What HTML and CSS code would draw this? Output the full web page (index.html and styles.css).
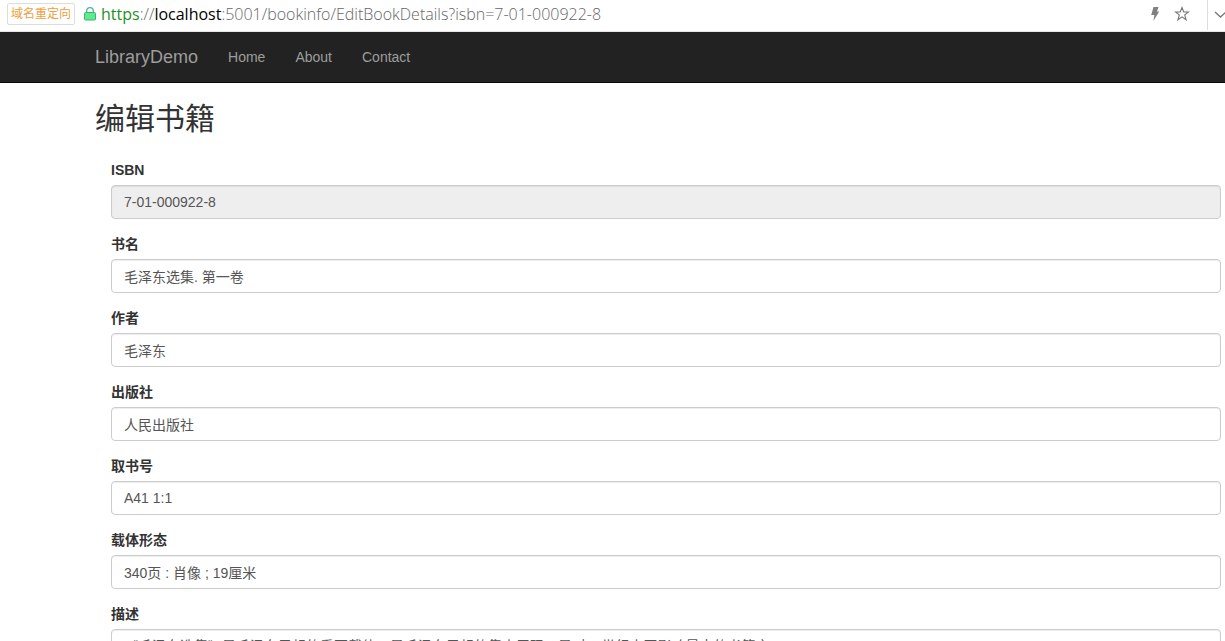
FILE: index.html
```html
<!DOCTYPE html>
<html lang="zh-CN">
<head>
  <meta charset="UTF-8" />
  <meta name="viewport" content="width=device-width, initial-scale=1.0" />
  <title>编辑书籍 - LibraryDemo</title>
  <link rel="stylesheet" href="styles.css">
</head>
<body>

  <!-- 地址栏 -->
  <div class="address-bar">
    <span class="redirect-tag">域名重定向</span>
    <svg class="icon-lock" width="12" height="14" viewBox="0 0 12 14">
      <path d="M2.7 6V4a3.3 3.3 0 0 1 6.6 0v2" fill="none" stroke="#4cb3a0" stroke-width="1.3" />
      <rect x="0.5" y="5.5" width="11" height="7.5" rx="1" fill="#5eea8d" stroke="#35b877" />
    </svg>
    <div class="url"><span class="scheme">https</span>://<span class="host">localhost</span>:5001/bookinfo/EditBookDetails?isbn=7-01-000922-8</div>
    <div class="address-actions">
      <button type="button" aria-label="极速模式">
        <svg width="16" height="16" viewBox="0 0 16 16">
          <path d="M6.5 1H11.5L10 5.5H12.2L6.4 15L7.4 9H4.2Z" fill="#808080" />
        </svg>
      </button>
      <button type="button" aria-label="收藏">
        <svg width="16" height="16" viewBox="0 0 16 16">
          <path d="M8 1.5L9.7 6H14.5L10.7 8.9L12.1 13.8L8 10.9L3.9 13.8L5.3 8.9L1.5 6H6.3Z" fill="none" stroke="#777" stroke-width="1.1" />
        </svg>
      </button>
      <button type="button" class="more" aria-label="更多">
        <svg width="12" height="16" viewBox="0 0 12 16">
          <path d="M2 6L7.5 11L13 6" fill="none" stroke="#777" stroke-width="1.3" />
        </svg>
      </button>
    </div>
  </div>

  <!-- 导航栏 -->
  <nav class="navbar">
    <a class="navbar-brand" href="#">LibraryDemo</a>
    <a href="#">Home</a>
    <a href="#">About</a>
    <a href="#">Contact</a>
  </nav>

  <!-- 编辑表单 -->
  <main class="body-content">
    <h2>编辑书籍</h2>
    <form>
      <div class="form-group">
        <label for="isbn">ISBN</label>
        <input class="form-control" id="isbn" type="text" value="7-01-000922-8" readonly />
      </div>
      <div class="form-group">
        <label for="name">书名</label>
        <input class="form-control" id="name" type="text" value="毛泽东选集. 第一卷" />
      </div>
      <div class="form-group">
        <label for="author">作者</label>
        <input class="form-control" id="author" type="text" value="毛泽东" />
      </div>
      <div class="form-group">
        <label for="press">出版社</label>
        <input class="form-control" id="press" type="text" value="人民出版社" />
      </div>
      <div class="form-group">
        <label for="fetchNumber">取书号</label>
        <input class="form-control" id="fetchNumber" type="text" value="A41 1:1" />
      </div>
      <div class="form-group">
        <label for="shape">载体形态</label>
        <input class="form-control" id="shape" type="text" value="340页 : 肖像 ; 19厘米" />
      </div>
      <div class="form-group">
        <label for="description">描述</label>
        <textarea class="form-control" id="description" rows="4">《毛泽东选集》是毛泽东思想的重要载体，是毛泽东思想的集中展现，是对20世纪中国影响最大的书籍之一。</textarea>
      </div>
    </form>
  </main>

</body>
</html>
```
FILE: styles.css
```css
* {
  box-sizing: border-box;
}

html {
  scrollbar-width: none;
}

body {
  margin: 0;
  background-color: #fff;
  color: #333;
  font-family: "Liberation Sans", "Noto Sans CJK SC", sans-serif;
  font-size: 14px;
  line-height: 20px;
}

/* 地址栏 */
.address-bar {
  display: flex;
  align-items: center;
  height: 32px;
  padding-left: 7px;
  padding-bottom: 4px;
  border-bottom: 1px solid #e6e6e6;
}

.redirect-tag {
  padding: 0 3px;
  border: 1px solid #ddd;
  border-radius: 2px;
  color: #eda03c;
  font-size: 12px;
}

.icon-lock {
  margin: 0 5px 0 9px;
}

.url {
  flex: 1;
  color: #666;
  font-family: "Open Sans", sans-serif;
  font-size: 16px;
  font-weight: 300;
  white-space: nowrap;
}

.scheme {
  color: #1f8f1f;
  font-weight: 400;
}

.host {
  color: #000;
  font-weight: 400;
}

.address-actions {
  display: flex;
  align-items: center;
  gap: 11px;
}

.address-actions button {
  display: flex;
  padding: 0;
  border: 0;
  background: none;
  cursor: pointer;
}

.address-actions .more {
  margin-left: 6px;
  padding: 8px 0 8px 5px;
  border-left: 1px solid #ddd;
}

/* 导航栏 */
.navbar {
  display: flex;
  align-items: center;
  height: 51px;
  padding-left: 80px;
  background-color: #222;
  border-bottom: 1px solid #080808;
}

.navbar a {
  padding: 15px;
  color: #9d9d9d;
  text-decoration: none;
}

.navbar a:hover {
  color: #fff;
}

.navbar .navbar-brand {
  font-size: 18px;
}

/* 内容 */
.body-content {
  padding: 0 4px 0 95px;
}

h2 {
  margin: 19px 0 25px;
  font-size: 30px;
  font-weight: 400;
  line-height: 33px;
}

form {
  padding-left: 16px;
}

.form-group {
  margin-bottom: 15px;
}

label {
  display: block;
  margin-bottom: 5px;
  font-weight: 700;
}

.form-control {
  display: block;
  width: 100%;
  height: 34px;
  padding: 6px 12px;
  border: 1px solid #ccc;
  border-radius: 4px;
  box-shadow: inset 0 1px 1px rgba(0, 0, 0, 0.075);
  background-color: #fff;
  color: #555;
  font-family: inherit;
  font-size: 14px;
  line-height: 20px;
}

.form-control:focus {
  border-color: #66afe9;
  outline: 0;
}

.form-control[readonly] {
  background-color: #eee;
}

textarea.form-control {
  height: auto;
  resize: vertical;
}
```
